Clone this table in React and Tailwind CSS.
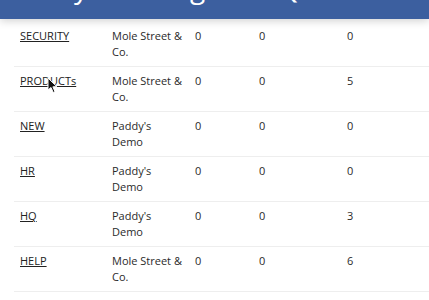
import React from 'react';

const rows = [
  { name: 'SECURITY', tenant: 'Mole Street & Co.', a: 0, b: 0, c: 0 },
  { name: 'PRODUCTs', tenant: 'Mole Street & Co.', a: 0, b: 0, c: 5 },
  { name: 'NEW', tenant: "Paddy's Demo", a: 0, b: 0, c: 0 },
  { name: 'HR', tenant: "Paddy's Demo", a: 0, b: 0, c: 0 },
  { name: 'HQ', tenant: "Paddy's Demo", a: 0, b: 0, c: 3 },
  { name: 'HELP', tenant: 'Mole Street & Co.', a: 0, b: 0, c: 6 },
];

const Cursor = () => (
  <svg className="absolute left-[47px] top-[77px] w-[11px] h-[17px]" viewBox="0 0 11 17">
    <path d="M1 1 L1 13 L4 10.5 L6.2 15.5 L8 14.7 L5.9 9.8 L9.8 9.6 Z" fill="#111" stroke="#fff" strokeWidth="1" strokeLinejoin="round" />
  </svg>
);

const App = () => {
  return (
    <div className="relative w-[429px] h-[300px] overflow-hidden bg-white font-['Open_Sans',sans-serif] text-[#2a2a2a]">
      {/* Header bar (scrolled mostly out of view) */}
      <div className="relative z-10 h-[19px] overflow-hidden bg-[#3c5f9f] shadow-[0_2px_8px_rgba(0,0,0,0.18)]">
        <div className="mt-[-27px] pl-[24px] text-[28px] leading-[28px] text-white whitespace-nowrap">
          Daily Tracking for HQ
        </div>
      </div>

      {/* Table */}
      <div className="pl-[14px] pt-[3px]">
        <table className="table-fixed w-[440px] border-collapse text-[11px] leading-4">
          <colgroup>
            <col className="w-[92px]" />
            <col className="w-[83px]" />
            <col className="w-[64px]" />
            <col className="w-[88px]" />
            <col />
          </colgroup>
          <tbody>
            {rows.map((r) => (
              <tr key={r.name} className="border-b border-[#eeeeee] align-top">
                <td className="px-[6px] py-[6px]">
                  <a className="underline text-[#222]">{r.name}</a>
                </td>
                <td className="px-[6px] py-[6px]">{r.tenant}</td>
                <td className="px-[6px] py-[6px]">{r.a}</td>
                <td className="px-[6px] py-[6px]">{r.b}</td>
                <td className="px-[6px] py-[6px]">{r.c}</td>
              </tr>
            ))}
          </tbody>
        </table>
      </div>

      <Cursor />
    </div>
  );
};

export default App;
